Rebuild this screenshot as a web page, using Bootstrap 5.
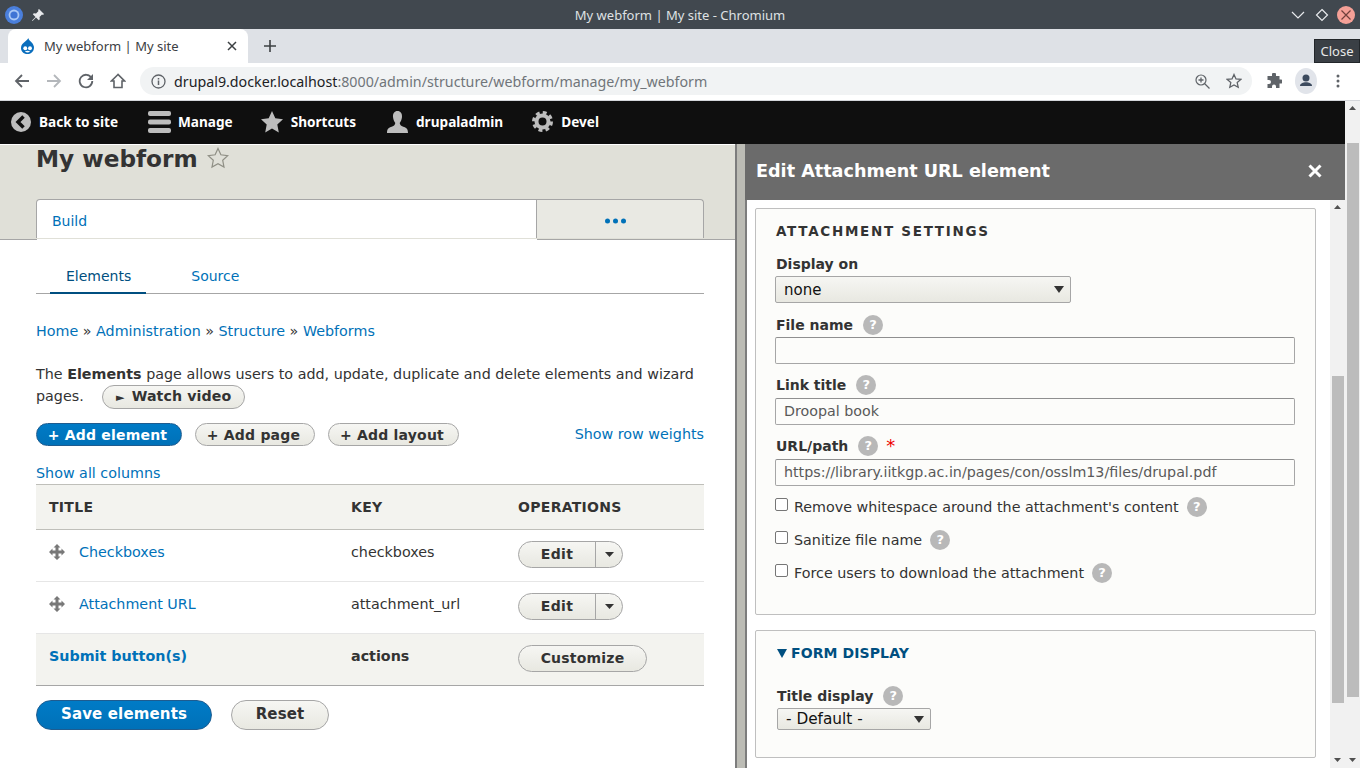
<!DOCTYPE html>
<html lang="en">
<head>
    <meta charset="UTF-8">
    <meta name="viewport" content="width=device-width, initial-scale=1.0">
    <title>My webform | My site - Chromium</title>
    <link href="https://cdn.jsdelivr.net/npm/bootstrap@5.3.0/dist/css/bootstrap.min.css" rel="stylesheet">
    <style>
        html, body { height: 100%; }
        body { width: 1360px; height: 768px; overflow: hidden; background: #fff; font-family: "DejaVu Sans", sans-serif; font-size: 14.3px; color: #333; }
        a { color: #0071b8; text-decoration: none; }

        /* browser chrome */
        .win-title { height: 29px; background: #41484f; color: #dfe1e3; font: 13px "Noto Sans", sans-serif; padding: 0 5px 0 5px; }
        .win-title-text { flex: 1; text-align: center; padding-left: 24px; }
        .win-chevron { margin-right: 2px; }
        .win-close { width: 18px; height: 18px; border-radius: 50%; background: #f5a097; }
        .tab-strip { height: 34px; background: #dee1e6; padding-left: 8px; }
        .browser-tab { width: 240px; height: 34px; background: #fff; border-radius: 8px 8px 0 0; font: 13px "Noto Sans", sans-serif; color: #3c4043; padding: 0 11px 0 12px; }
        .browser-tab span { flex: 1; padding-left: 9px; }
        .new-tab { margin-left: 16px; }
        .tool-bar { height: 38px; background: #fff; border-bottom: 1px solid #d4d6da; padding-left: 14px; padding-bottom: 1px; }
        .nav-ico { width: 32px; }
        .url-bar { width: 1112px; height: 28px; margin-left: -2px; background: #f1f3f4; border-radius: 14px; font: 14.25px "Noto Sans", sans-serif; color: #70757a; padding: 0 10px 0 11px; }
        .url-bar b { font-weight: 400; color: #202124; }
        .url-text { flex: 1; padding-left: 8px; white-space: nowrap; }
        .close-tip { position: absolute; left: 1314px; top: 39px; width: 46px; height: 24px; background: #3a3f45; border: 1px solid #22262a; color: #e8e8e8; font: 13px "Noto Sans", sans-serif; text-align: center; line-height: 22px; }
        .ext-ico { margin-left: 14px; }
        .prof-ico { margin-left: 13px; }
        .dots-ico { margin-left: 13px; }

        /* page + scrollbars */
        .page-wrap { height: 667px; }
        .page-main { width: 1345px; }
        .admin-bar { height: 43px; background: #0f0f0f; color: #fff; font: 700 13.6px "Noto Sans", sans-serif; padding: 0 0 2px 11px; gap: 30px; }
        .admin-item { gap: 7px; }
        .admin-item:nth-child(1) { gap: 8px; }
        .admin-item:nth-child(3) { margin-left: -2px; gap: 8px; }
        .admin-item:nth-child(4) { margin-left: 1px; gap: 8px; }
        .admin-item:nth-child(5) { gap: 8px; margin-left: -1px; }
        .page-split { height: 624px; }
        .left-pane { width: 735px; overflow: hidden; }
        .pane-head { height: 94px; background: #e0e0d8; padding: 0 31px 0 36px; }
        .pane-head h1 { font: 700 23.2px/28px "DejaVu Sans", sans-serif; color: #333; margin: 1px 0 0; height: 54px; }
        .pane-head h1 svg { margin-left: 1px; vertical-align: -2px; }
        .prim-tabs { height: 39px; }
        .prim-tab { width: 501px; height: 39px; background: #fff; border: 1px solid #a6a6a6; border-bottom: 0; border-radius: 4px 0 0 0; padding: 12px 15px; line-height: 18px; font-size: 14px; }
        .prim-more { width: 167px; height: 39px; background: #e9e9e3; border: 1px solid #a6a6a6; border-left: 0; border-bottom: 0; border-radius: 0 4px 0 0; padding: 4px 10px 0 0; }
        .head-rule { height: 1px; background: #a6a6a6; }
        .head-rule-gap { width: 500px; margin-left: 37px; background: #fff; }
        .pane-body { padding: 0 31px 0 36px; }
        .sub-tabs { margin-top: 15px; height: 39px; border-bottom: 1px solid #a6a6a6; padding-left: 14px; }
        .sub-tab { padding: 12px 15px 0 16px; height: 39px; margin-right: 29px; line-height: 18px; font-size: 14px; }
        .sub-tab.on { color: #004f80; border-bottom: 2px solid #004f80; }
        .crumbs { margin: 27px 0 0; line-height: 20px; color: #333; }
        .intro { margin: 22px 0 0; line-height: 22px; }
        .pill-btn { background: linear-gradient(#f6f6f3, #e8e8e1); border: 1px solid #a6a6a6; border-radius: 20px; color: #333; font-weight: 700; font-size: 14px; line-height: 20px; padding: 0; letter-spacing: .2px; }
        .pill-blue { background: linear-gradient(#007bc6, #0071b8); border-color: #1e5c90; color: #fff; }
        .video-btn { width: 143px; height: 24px; margin-left: 14px; font-size: 14.2px; line-height: 21px; letter-spacing: .1px; }
        .video-btn small { font-size: 11px; margin-right: 2px; font-weight: 400; }
        .act-row { margin-top: 14px; height: 23px; gap: 13px; }
        .add-btn { padding: 0 3px 0 0; line-height: 20px; letter-spacing: .2px; }
        .add-el { width: 146px; }
        .add-pg { width: 120px; }
        .add-ly { width: 131px; }
        .weights-link { margin-left: auto; padding-top: 1px; }
        .all-cols { margin-top: 17px; line-height: 20px; }
        .el-table { width: 668px; margin: 1px 0 0; table-layout: fixed; border-collapse: collapse; color: #333; }
        .el-table th, .el-table td { padding: 0 0 0 13px; vertical-align: middle; border-bottom: 1px solid #e6e6e6; }
        .el-table thead th { height: 45px; background: #f3f3ef; border-top: 1px solid #bfbfba; border-bottom: 1px solid #bfbfba; font-size: 14px; letter-spacing: .3px; }
        .el-table tbody td { height: 52px; padding-bottom: 5px; }
        .el-table tfoot td { height: 52px; background: #f3f3ef; border-top: 1px solid #a6a6a6; border-bottom: 1px solid #a6a6a6; font-weight: 700; padding-bottom: 6px; }
        .el-table tbody td.ops, .el-table tfoot td.ops { padding-bottom: 3px; }
        .grip { margin: 0 14px 0 0; vertical-align: -3px; }
        .split-btn { width: 105px; height: 27px; background: linear-gradient(#f6f6f3, #e8e8e1); border: 1px solid #a6a6a6; border-radius: 20px; font-weight: 700; overflow: hidden; font-size: 14px; }
        .split-main { width: 76px; text-align: center; line-height: 24px; letter-spacing: .3px; }
        .split-caret { flex: 1; border-left: 1px solid #a6a6a6; }
        .custom-btn { width: 129px; height: 27px; line-height: 24px; display: block; }
        .form-acts { margin-top: 14px; gap: 19px; }
        .save-btn { height: 30px; font-size: 15px; line-height: 25px; letter-spacing: .15px; padding: 0 0 2px; }
        .save-main { width: 176px; }
        .save-reset { width: 98px; }

        .splitter { width: 10px; background: #bcbcb5; border-left: 2px solid #7d7d7d; }
        .right-pane { width: 600px; }
        .panel-head { height: 56px; background: #6b6b6b; color: #fff; font-size: 17.6px; font-weight: 700; padding: 0 23px 2px 11px; }
        .panel-head span { flex: 1; }
        .panel-body { height: 568px; }
        .panel-scroll { flex: 1; overflow: hidden; padding: 8px 14px 0 8px; border-left: 2px solid #7d7d7d; }
        .field-box { background: #fcfcfa; border: 1px solid #bfbfbf; border-radius: 2px; padding: 0 19px; margin: 0; }
        .box-one { height: 407px; padding-top: 14px; }
        .box-two { height: 128px; margin-top: 15px; padding: 13px 21px; }
        .box-legend { font-size: 13.5px; font-weight: 700; letter-spacing: 1.7px; line-height: 16px; margin: 0 0 17px 1px; }
        .f-label { font-weight: 700; font-size: 14px; line-height: 16px; display: flex; align-items: center; gap: 10px; margin: 0 0 0 1px; }
        .hint { display: inline-block; width: 20px; height: 20px; border-radius: 50%; background: #b8b8b8; color: #fff; font-size: 13px; font-weight: 700; text-align: center; line-height: 20px; flex: none; }
        .req { color: #e00; font-size: 18px; line-height: 14px; font-weight: 400; margin-left: -2px; }
        .form-select.drop-sel { width: 296px; height: 27px; padding: 0 8px; margin: 4px 0 12px; font: 15px "DejaVu Sans", sans-serif; color: #111; border: 1px solid #a6a6a6; border-radius: 2px; box-shadow: none;
            background-image: url("data:image/svg+xml,%3csvg xmlns='http://www.w3.org/2000/svg' viewBox='0 0 10 7'%3e%3cpath fill='%23333' d='M0 0h10L5 7z'/%3e%3c/svg%3e"), linear-gradient(#f6f6f3, #e8e8e1);
            background-repeat: no-repeat; background-position: right 6px center, 0 0; background-size: 10px 7px, auto; }
        .form-control.txt-in { width: 520px; height: 27px; padding: 0 8px; margin: 2px 0 11px; font: 14.25px "DejaVu Sans", sans-serif; color: #595959; background: #fcfcfa; border: 1px solid #a6a6a6; border-top-color: #8f8f8f; border-radius: 2px; }
        .form-control.txt-low { margin-top: 3px; padding-bottom: 2px; }
        .form-control.url-in { margin-bottom: 4px; }
        .chk-row { display: flex; align-items: center; gap: 6px; height: 33px; margin: 0; line-height: 20px; }
        .chk-row .form-check-input { width: 13px; height: 13px; margin: -4px 0 0; border: 1px solid #767676; border-radius: 2px; flex: none; }
        .chk-row .hint { margin-left: 2px; }
        .summary-line { color: #004f80; font-size: 14px; font-weight: 700; line-height: 18px; margin-bottom: 24px; letter-spacing: .1px; }
        .summary-line svg { margin-right: 4px; vertical-align: 0; }
        .form-select.drop-sel.title-sel { width: 154px; height: 22px; margin: 2px 0 0; padding: 0 8px; font-size: 15.3px; }
        .box-two .f-label { margin-left: 0; }

        .scroll-track { width: 15px; background: #f1f1f1; position: relative; }
        .thumb { background: #bcbcbc; }
        .inner-track { width: 15px; }
        .inner-thumb { width: 12px; height: 327px; margin: 176px 0 0 2px; }
        .outer-track { width: 15px; }
        .outer-thumb { width: 12px; height: 554px; margin: 42px 0 0 2px; }
        .sb-up, .sb-down { position: absolute; left: 4px; width: 7px; height: 4px; background: #505050; }
        .sb-up { top: 5px; clip-path: polygon(50% 0, 100% 100%, 0 100%); }
        .sb-down { bottom: 6px; clip-path: polygon(0 0, 100% 0, 50% 100%); }
    </style>
</head>
<body>
    <!-- window title -->
    <div class="win-title d-flex align-items-center">
        <svg width="18" height="18" viewBox="0 0 20 20"><circle cx="10" cy="10" r="10" fill="#4a7fdc"/><circle cx="10" cy="10" r="6" fill="#a9c8f5"/><circle cx="10" cy="10" r="4" fill="#3f74d4"/></svg>
        <svg class="ms-2" width="14" height="14" viewBox="0 0 14 14"><path fill="#e8eaed" d="M8 1l5 5-1 1-1-.5-2.500 2.500.3 2.200-1 1L5 9.500 1.500 13 1 12.500 4.500 9 1.800 6.200l1-1 2.200.3L7.500 3 7 2z"/></svg>
        <div class="win-title-text">My webform | My site - Chromium</div>
        <svg class="win-chevron" width="14" height="10" viewBox="0 0 14 10"><path fill="none" stroke="#e8eaed" stroke-width="1.200" d="M1 2l6 6 6-6"/></svg>
        <svg class="ms-2" width="14" height="14" viewBox="0 0 14 14"><path fill="none" stroke="#e8eaed" stroke-width="1.200" d="M7 1.500L12.500 7 7 12.500 1.500 7z"/></svg>
        <div class="win-close ms-2 d-flex align-items-center justify-content-center"><svg width="12" height="12" viewBox="0 0 12 12"><path stroke="#70403c" stroke-width="1.200" d="M1.500 1.500l9 9M10.500 1.500l-9 9"/></svg></div>
    </div>

    <!-- tab strip -->
    <div class="tab-strip d-flex align-items-center">
        <div class="browser-tab d-flex align-items-center">
            <svg width="15" height="16" viewBox="0 0 16 18"><path fill="#0a6ebd" d="M9 0c0 3 5 4.500 6.200 9.500C16 14 12.500 18 8 18S0 14.500 .8 10C1.500 5.500 7 4 9 0z"/><circle cx="5.500" cy="11.500" r="2.200" fill="#fff"/><circle cx="10.800" cy="11.500" r="2.200" fill="#fff"/><path fill="#fff" d="M5 15.300c2-1.300 4-1.300 6 0-2 1.400-4 1.400-6 0z"/></svg>
            <span>My webform | My site</span>
            <svg width="10" height="10" viewBox="0 0 10 10"><path stroke="#3c4043" stroke-width="1.500" d="M1 1l8 8M9 1L1 9"/></svg>
        </div>
        <svg class="new-tab" width="12" height="12" viewBox="0 0 12 12"><path stroke="#3c4043" stroke-width="1.600" d="M6 0v12M0 6h12"/></svg>
    </div>

    <!-- address row -->
    <div class="tool-bar d-flex align-items-center">
        <div class="nav-ico"><svg width="16" height="16" viewBox="0 0 16 16"><path fill="none" stroke="#5f6368" stroke-width="1.800" d="M15 8H2M8 2L2 8l6 6"/></svg></div>
        <div class="nav-ico"><svg width="16" height="16" viewBox="0 0 16 16"><path fill="none" stroke="#b4b7bb" stroke-width="1.800" d="M1 8h13M8 2l6 6-6 6"/></svg></div>
        <div class="nav-ico"><svg width="16" height="16" viewBox="0 0 16 16"><path fill="none" stroke="#5f6368" stroke-width="1.800" d="M13.500 5A6.300 6.300 0 1 0 14.300 8"/><path fill="#5f6368" d="M15 1v6H9z"/></svg></div>
        <div class="nav-ico"><svg width="16" height="16" viewBox="0 0 16 16"><path fill="none" stroke="#5f6368" stroke-width="1.600" d="M8 1.500L1.500 8H4v6.500h8V8h2.500z"/></svg></div>
        <div class="url-bar d-flex align-items-center">
            <svg width="15" height="15" viewBox="0 0 15 15"><circle cx="7.500" cy="7.500" r="6.500" fill="none" stroke="#5f6368" stroke-width="1.300"/><path stroke="#5f6368" stroke-width="1.500" d="M7.500 6.500V11M7.500 4v1.500"/></svg>
            <div class="url-text"><b>drupal9.docker.localhost</b>:8000/admin/structure/webform/manage/my_webform</div>
            <svg width="15" height="15" viewBox="0 0 15 15"><circle cx="6" cy="6" r="5" fill="none" stroke="#5f6368" stroke-width="1.200"/><path stroke="#5f6368" stroke-width="1.300" d="M9.500 9.500l5 5M6 3.500v5M3.500 6h5"/></svg>
            <svg class="ms-3" width="16" height="16" viewBox="0 0 16 16"><path fill="none" stroke="#5f6368" stroke-width="1.300" d="M8 1.500l2 4.400 4.800.5-3.600 3.200 1 4.700L8 11.900l-4.200 2.400 1-4.700L1.200 6.400 6 5.900z"/></svg>
        </div>
        <svg class="ext-ico" width="16" height="16" viewBox="0 0 16 16"><path fill="#5f6368" d="M6 1.500a2 2 0 0 1 4 0V3h3.500v3.500H15a2 2 0 0 1 0 4h-1.500V15H10v-1.500a2 2 0 0 0-4 0V15H1.500v-4H3a2 2 0 0 0 0-4H1.500V3H6z"/></svg>
        <svg class="prof-ico" width="22" height="26" viewBox="0 0 22 26"><ellipse cx="11" cy="13" rx="11" ry="13" fill="#e1e4ea"/><circle cx="11" cy="10" r="3.500" fill="#3c4a5e"/><path fill="#3c4a5e" d="M5 18c0-5 12-5 12 0z"/></svg>
        <svg class="dots-ico" width="16" height="16" viewBox="0 0 16 16"><circle cx="8" cy="3" r="1.500" fill="#5f6368"/><circle cx="8" cy="8" r="1.500" fill="#5f6368"/><circle cx="8" cy="13" r="1.500" fill="#5f6368"/></svg>
    </div>
    <div class="close-tip">Close</div>

    <div class="page-wrap d-flex">
        <div class="page-main">
            <!-- drupal toolbar -->
            <div class="admin-bar d-flex align-items-center">
                <div class="admin-item d-flex align-items-center">
                    <svg width="20" height="20" viewBox="0 0 20 20"><circle cx="10" cy="10" r="10" fill="#bdbdbd"/><path fill="none" stroke="#0f0f0f" stroke-width="3.500" d="M12.500 4.500L7 10l5.500 5.500"/></svg>
                    <span>Back to site</span>
                </div>
                <div class="admin-item d-flex align-items-center">
                    <svg width="23" height="22" viewBox="0 0 23 22"><g fill="#bdbdbd"><rect y="0" width="23" height="5" rx="2"/><rect y="8.500" width="23" height="5" rx="2"/><rect y="17" width="23" height="5" rx="2"/></g></svg>
                    <span>Manage</span>
                </div>
                <div class="admin-item d-flex align-items-center">
                    <svg width="22" height="22" viewBox="0 0 22 22"><path fill="#bdbdbd" d="M11 0l3.300 7.300 7.700.9-5.700 5.300 1.500 8L11 17.500 4.200 21.500l1.500-8L0 8.200l7.700-.9z"/></svg>
                    <span>Shortcuts</span>
                </div>
                <div class="admin-item d-flex align-items-center">
                    <svg width="21" height="22" viewBox="0 0 21 22"><path fill="#bdbdbd" d="M10.500 0c3 0 4.800 2.500 4.500 6-.3 3-1.500 5-2.300 6 .2 2 1.500 3 4.300 4 2.500.9 4 2 4 6H0c0-4 1.500-5.100 4-6 2.800-1 4.100-2 4.300-4-.8-1-2-3-2.300-6-.3-3.500 1.500-6 4.500-6z"/></svg>
                    <span>drupaladmin</span>
                </div>
                <div class="admin-item d-flex align-items-center">
                    <svg width="21" height="21" viewBox="0 0 21 21"><circle cx="10.500" cy="10.500" r="6" fill="none" stroke="#bdbdbd" stroke-width="4"/><circle cx="10.500" cy="10.500" r="9" fill="none" stroke="#bdbdbd" stroke-width="3" stroke-dasharray="3.900 3.170"/></svg>
                    <span>Devel</span>
                </div>
            </div>

            <div class="page-split d-flex">
                <!-- webform builder -->
                <div class="left-pane">
                    <div class="pane-head">
                        <h1>My webform <svg width="22" height="22" viewBox="0 0 22 22"><path fill="none" stroke="#8f8f85" stroke-width="1.200" d="M11 1.500l2.900 6.300 6.800.8-5 4.700 1.300 6.800-6-3.400-6 3.400 1.300-6.800-5-4.700 6.800-.8z"/></svg></h1>
                        <div class="prim-tabs d-flex">
                            <a class="prim-tab" href="#">Build</a>
                            <div class="prim-more d-flex align-items-center justify-content-center"><svg width="21" height="6" viewBox="0 0 21 6"><g fill="#0071b8"><circle cx="2.500" cy="3" r="2.500"/><circle cx="10.500" cy="3" r="2.500"/><circle cx="18.500" cy="3" r="2.500"/></g></svg></div>
                        </div>
                    </div>
                    <div class="head-rule"><div class="head-rule-gap head-rule"></div></div>
                    <div class="pane-body">
                        <div class="sub-tabs d-flex">
                            <a class="sub-tab on" href="#">Elements</a>
                            <a class="sub-tab" href="#">Source</a>
                        </div>
                        <div class="crumbs"><a href="#">Home</a> » <a href="#">Administration</a> » <a href="#">Structure</a> » <a href="#">Webforms</a></div>
                        <p class="intro">The <b>Elements</b> page allows users to add, update, duplicate and delete elements and wizard pages. <button type="button" class="btn pill-btn video-btn"><small>►</small> Watch video</button></p>
                        <div class="act-row d-flex align-items-stretch">
                            <button type="button" class="btn pill-btn pill-blue add-btn add-el">+ Add element</button>
                            <button type="button" class="btn pill-btn add-btn add-pg">+ Add page</button>
                            <button type="button" class="btn pill-btn add-btn add-ly">+ Add layout</button>
                            <a class="weights-link" href="#">Show row weights</a>
                        </div>
                        <div class="all-cols"><a href="#">Show all columns</a></div>
                        <table class="el-table">
                            <colgroup><col style="width:302px"><col style="width:167px"><col style="width:199px"></colgroup>
                            <thead>
                                <tr><th>TITLE</th><th>KEY</th><th>OPERATIONS</th></tr>
                            </thead>
                            <tbody>
                                <tr>
                                    <td><svg class="grip" width="16" height="16" viewBox="0 0 16 16"><path fill="#787878" d="M8 0l3.500 3.500h-2v3h3v-2L16 8l-3.500 3.500v-2h-3v3h2L8 16l-3.500-3.500h2v-3h-3v2L0 8l3.500-3.500v2h3v-3h-2z"/></svg><a href="#">Checkboxes</a></td>
                                    <td>checkboxes</td>
                                    <td class="ops"><div class="split-btn d-flex"><div class="split-main">Edit</div><div class="split-caret d-flex align-items-center justify-content-center"><svg width="9" height="5" viewBox="0 0 9 5"><path fill="#333" d="M0 0h9L4.500 5z"/></svg></div></div></td>
                                </tr>
                                <tr>
                                    <td><svg class="grip" width="16" height="16" viewBox="0 0 16 16"><path fill="#787878" d="M8 0l3.500 3.500h-2v3h3v-2L16 8l-3.500 3.500v-2h-3v3h2L8 16l-3.500-3.500h2v-3h-3v2L0 8l3.500-3.500v2h3v-3h-2z"/></svg><a href="#">Attachment URL</a></td>
                                    <td>attachment_url</td>
                                    <td class="ops"><div class="split-btn d-flex"><div class="split-main">Edit</div><div class="split-caret d-flex align-items-center justify-content-center"><svg width="9" height="5" viewBox="0 0 9 5"><path fill="#333" d="M0 0h9L4.500 5z"/></svg></div></div></td>
                                </tr>
                            </tbody>
                            <tfoot>
                                <tr>
                                    <td><a href="#">Submit button(s)</a></td>
                                    <td>actions</td>
                                    <td class="ops"><button type="button" class="btn pill-btn custom-btn">Customize</button></td>
                                </tr>
                            </tfoot>
                        </table>
                        <div class="form-acts d-flex">
                            <button type="button" class="btn pill-btn pill-blue save-btn save-main">Save elements</button>
                            <button type="button" class="btn pill-btn save-btn save-reset">Reset</button>
                        </div>
                    </div>
                </div>

                <div class="splitter"></div>

                <!-- off canvas dialog -->
                <div class="right-pane">
                    <div class="panel-head d-flex align-items-center">
                        <span>Edit Attachment URL element</span>
                        <svg width="14" height="14" viewBox="0 0 14 14"><path stroke="#fff" stroke-width="3" d="M1.500 1.500l11 11M12.500 1.500l-11 11"/></svg>
                    </div>
                    <div class="panel-body d-flex">
                        <div class="panel-scroll">
                            <fieldset class="field-box box-one">
                                <div class="box-legend">ATTACHMENT SETTINGS</div>
                                <label class="f-label" for="displayOn">Display on</label>
                                <select class="form-select drop-sel" id="displayOn"><option>none</option></select>
                                <label class="f-label" for="fileName">File name <span class="hint">?</span></label>
                                <input type="text" class="form-control txt-in" id="fileName">
                                <label class="f-label" for="linkTitle">Link title <span class="hint">?</span></label>
                                <input type="text" class="form-control txt-in txt-low" id="linkTitle" value="Droopal book">
                                <label class="f-label" for="urlPath">URL/path <span class="hint">?</span> <span class="req">*</span></label>
                                <input type="text" class="form-control txt-in txt-low url-in" id="urlPath" value="https://library.iitkgp.ac.in/pages/con/osslm13/files/drupal.pdf">
                                <label class="chk-row"><input type="checkbox" class="form-check-input"> Remove whitespace around the attachment's content <span class="hint">?</span></label>
                                <label class="chk-row"><input type="checkbox" class="form-check-input"> Sanitize file name <span class="hint">?</span></label>
                                <label class="chk-row"><input type="checkbox" class="form-check-input"> Force users to download the attachment <span class="hint">?</span></label>
                            </fieldset>
                            <fieldset class="field-box box-two">
                                <div class="summary-line"><svg width="10" height="9" viewBox="0 0 10 9"><path fill="#004f80" d="M0 0h10L5 9z"/></svg>FORM DISPLAY</div>
                                <label class="f-label" for="titleDisplay">Title display <span class="hint">?</span></label>
                                <select class="form-select drop-sel title-sel" id="titleDisplay"><option>- Default -</option></select>
                            </fieldset>
                        </div>
                        <div class="scroll-track inner-track">
                            <div class="sb-up"></div>
                            <div class="thumb inner-thumb"></div>
                            <div class="sb-down"></div>
                        </div>
                    </div>
                </div>
            </div>
        </div>
        <div class="scroll-track outer-track">
            <div class="sb-up"></div>
            <div class="thumb outer-thumb"></div>
            <div class="sb-down"></div>
        </div>
    </div>
    <script src="https://cdn.jsdelivr.net/npm/bootstrap@5.3.0/dist/js/bootstrap.bundle.min.js"></script>
</body>
</html>
